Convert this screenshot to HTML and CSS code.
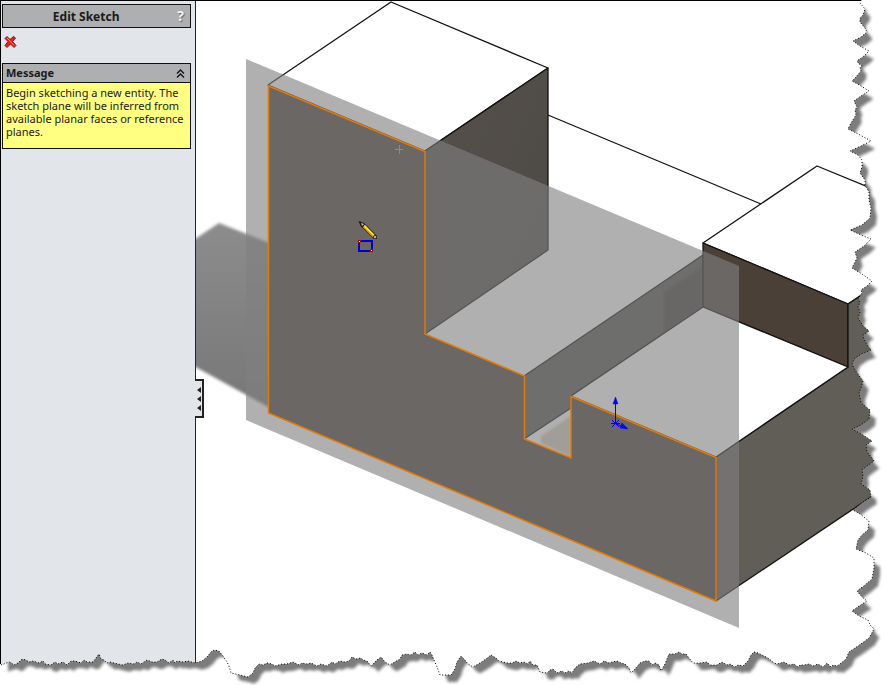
FILE: index.html
```html
<!DOCTYPE html>
<html lang="en">
<head>
<meta charset="utf-8">
<title>Edit Sketch</title>
<link rel="stylesheet" href="styles.css">
</head>
<body>
<div class="app">
  <aside class="panel">
    <header class="panel-title">
      <h1>Edit Sketch</h1>
      <button class="help" type="button" aria-label="Help">?</button>
    </header>
    <div class="actions">
      <button class="cancel" type="button" aria-label="Cancel">
        <svg viewBox="0 0 14 14" width="14" height="14">
          <path d="M2 3.500 4 1.500 7 4.500 10.500 1.500 12.500 3 9.500 6.500 13 10.500 11 12.500 7.500 9 4 12.500 2 10.500 5 6.500Z" fill="#e8231c" stroke="#7c1512"/>
          <path d="M4 3 7.500 6.500 11 10.500" fill="none" stroke="#ff8a80"/>
        </svg>
      </button>
    </div>
    <section class="message">
      <header class="message-head">
        <h2>Message</h2>
        <button class="collapse" type="button" aria-label="Collapse">
          <svg viewBox="0 0 9 9" width="9" height="9"><path d="M1 4.500 4.500 1 8 4.500M1 8.500 4.500 5 8 8.500" fill="none" stroke="#111" stroke-width="1.300"/></svg>
        </button>
      </header>
      <p>Begin sketching a new entity. The sketch plane will be inferred from available planar faces or reference planes.</p>
    </section>
    <button class="splitter" type="button" aria-label="Collapse panel">
      <svg viewBox="0 0 4 24" width="4" height="24"><path d="M4 0V6L0 3ZM4 9V15L0 12ZM4 18V24L0 21Z" fill="#222"/></svg>
    </button>
  </aside>
  <main class="viewport">
    <svg class="model" viewBox="196 0 691 685" preserveAspectRatio="xMinYMin meet" role="img" aria-label="Model with inferred sketch plane">
      <defs>
        <linearGradient id="castShade" x1="0" y1="0" x2="0" y2="1"><stop offset="0" stop-color="#8c8c8c"/><stop offset="1" stop-color="#777"/></linearGradient>
        <filter id="castBlur" x="-10%" y="-10%" width="120%" height="120%"><feGaussianBlur stdDeviation="1.800"/></filter>
        <filter id="patchBlur"><feGaussianBlur stdDeviation="1"/></filter>
        <linearGradient id="blade" x1="0" y1="0" x2="1" y2="1"><stop offset="0" stop-color="#554f48"/><stop offset="1" stop-color="#4c4a48"/></linearGradient>
      </defs>
      <path d="M186 245 219 223 272 244V409L190 364Z" fill="url(#castShade)" filter="url(#castBlur)"/>
      <g stroke="#111" stroke-width="1.300" stroke-linejoin="round">
        <path d="M548 115 761 204" fill="none"/>
        <path d="M268 85 391 2 548 68 425 151Z" fill="#fff"/>
        <path d="M425 151 548 68V250L425 334Z" fill="url(#blade)"/>
        <path d="M524 376 703 255V307L571 396V408L524 439Z" fill="#53514e"/>
        <path d="M664 292 702 267V307L664 332Z" fill="#44413e" stroke="none" filter="url(#patchBlur)"/>
        <path d="M703 243 817 166 895 198 887 278 848 304Z" fill="#fff"/>
        <path d="M703 243 848 304V367L703 307Z" fill="#4a4038"/>
        <path d="M716 457 848 367V304L895 273V481L716 601Z" fill="#605e57"/>
        <path d="M703 307 848 367 716 457 571 396Z" fill="#fff"/>
      </g>
      <path d="M541 436 571 416V457L541 443Z" fill="#d8d0c0" filter="url(#patchBlur)"/>
      <path d="M246 59 739 266V628L246 420Z" fill="#808080" fill-opacity=".62"/>
      <path d="M268.500 86 425 151.500V334L524.500 376V439L571 458V396.500L716 457.500V601L268.500 413Z" fill="#6b6764" stroke="#e27a08" stroke-width="1.500"/>
      <path d="M395 149.500H403M399.500 145V154" stroke="#d0783c" fill="none"/>
      <g fill="#00f" stroke="#00f">
        <path d="M615.500 423V403M611 423.500H620M612 420 619 427M619 420 612 427M616 424 622 426" fill="none"/>
        <path d="M615.500 397 618 404H613ZM622 423 628 429 620 428Z" stroke-width=".5"/>
      </g>
      <g>
        <path d="M359 241H372V251H359Z" fill="none" stroke="#0000c8" stroke-width="2"/>
        <path d="M358.500 240.500H360.500V242.500H358.500ZM370.500 249.500H372.500V251.500H370.500Z" fill="#fff" stroke="#b00000"/>
        <path d="M358.500 221 364 223 377 236V239H374L360.500 226Z" fill="#1c1a10"/>
        <path d="M361 223 364 224 362 226Z" fill="#dcb8a8"/>
        <path d="M363.200 226.800 373 236.500" stroke="#e8a800" stroke-width="1.200"/>
        <path d="M364.200 225.500 374 235.300" stroke="#ffe83a" stroke-width="1.800"/>
        <circle cx="375" cy="237" r="1.500" fill="#e8c8b8" stroke="#222" stroke-width=".6"/>
      </g>
    </svg>
  </main>
  <svg class="torn-edge" viewBox="0 0 887 685" preserveAspectRatio="none" aria-hidden="true">
    <defs>
      <path id="sheet" d="M0 0H861L860 3 865 9 863 15 860 18 860 22 865 28 867 32 861 37 853 41 860 46 869 51 864 56 857 61 859 64 862 65 860 68 861 71 856 77 852 81 861 86 869 91 861 96 854 101 857 107 855 110 856 115 851 123 848 129 860 135 871 141 861 146 850 151 858 155 862 160 862 167 860 173 865 180 865 185 869 192 869 200 871 208 870 218 862 225 850 230 861 235 871 239 864 246 855 252 857 258 854 264 852 268 862 274 872 281 867 286 861 290 862 293 858 299 860 302 858 307 860 312 858 318 863 326 869 331 863 335 864 339 867 345 871 350 861 354 854 359 852 364 855 370 860 377 863 381 861 388 859 393 861 403 866 407 870 410 869 419 861 425 852 429 863 435 872 441 866 445 867 452 872 458 874 461 867 466 862 470 863 476 861 484 870 490 871 497 863 502 853 510 860 514 869 521 868 530 862 535 858 540 856 549 866 553 874 558 874 568 872 579 865 585 857 591 862 597 867 601 859 606 852 611 859 616 868 620 870 625 874 629 869 638 858 646 849 652 846 659 840 664 837 666 833 665 831 667 827 663 823 667 818 664 813 666 809 664 804 665 800 665 798 667 794 664 789 665 784 662 777 664 774 663 768 658 762 655 758 653 754 652 751 655 748 661 743 666 738 665 735 667 730 664 727 665 722 662 717 665 710 665 707 662 700 663 693 663 689 658 686 654 682 654 679 652 675 654 669 654 665 664 661 671 659 665 655 663 652 665 649 661 645 661 640 663 635 669 631 673 629 668 625 664 621 663 617 661 612 662 609 663 604 661 600 664 594 661 588 663 580 664 575 668 572 673 569 671 565 673 562 671 557 673 553 669 550 670 547 673 540 672 537 665 533 665 530 661 528 664 524 662 520 663 516 661 512 663 507 663 499 661 496 658 491 655 486 659 480 663 473 667 468 664 464 659 461 656 457 662 455 669 451 675 440 675 437 667 434 660 432 655 430 652 427 655 422 653 418 655 415 652 411 655 407 654 402 655 400 659 393 663 390 665 385 662 381 657 377 660 371 666 367 661 363 660 361 658 356 659 352 657 349 661 345 662 340 661 335 664 332 662 327 666 321 664 317 666 311 663 307 664 302 663 299 665 293 662 287 664 282 664 275 666 272 664 267 663 263 665 259 664 255 668 253 673 248 677 240 675 231 673 229 666 227 662 223 656 219 651 214 650 211 652 207 657 202 661 195 663 188 661 183 662 177 661 175 663 173 660 169 663 165 660 162 659 157 662 152 662 147 660 141 664 137 662 134 664 128 663 123 665 118 664 110 662 107 663 104 660 101 659 99 654 96 658 93 662 87 662 84 660 81 663 75 661 71 661 67 665 63 662 58 664 55 662 51 665 45 664 43 661 39 663 33 661 29 662 26 660 22 659 18 663 14 665 10 662 6 663 2 665 0 664Z"/>
      <mask id="outside" maskUnits="userSpaceOnUse" x="0" y="0" width="887" height="685">
        <rect width="887" height="685" fill="#fff"/>
        <use href="#sheet" fill="#000"/>
      </mask>
      <filter id="dropBlur" x="-2%" y="-2%" width="104%" height="104%"><feMorphology operator="erode" radius="1"/><feGaussianBlur stdDeviation="1.700"/></filter>
    </defs>
    <g mask="url(#outside)">
      <rect width="887" height="685" fill="#fff"/>
      <use href="#sheet" transform="translate(7 8)" fill="#7c7c7c" filter="url(#dropBlur)"/>
    </g>
    <use href="#sheet" fill="none" stroke="#000" stroke-dasharray="1 2"/>
    <path d="M.500 664V.500H861" fill="none" stroke="#000"/>
  </svg>
</div>
</body>
</html>
```
FILE: styles.css
```css
* { box-sizing: border-box; }
body { margin: 0; background: #fff; color: #1a1a1a; font-family: "Noto Sans", "Open Sans", sans-serif; }
button { padding: 0; border: 0; background: none; font: inherit; color: inherit; cursor: pointer; }
svg { display: block; }
.app { position: relative; display: flex; height: 100vh; overflow: hidden; }
.panel { position: relative; flex: 0 0 196px; padding: 4px 4px 0 2px; background: #e2e6eb; border-right: 1px solid #22262a; }
.panel-title { display: flex; align-items: center; height: 24px; border: 1px solid #111; background: #adafb1; padding-right: 6px; }
.panel-title h1 { flex: 1; margin: 0; padding: 2px 8px 0 0; text-align: center; font-size: 12px; line-height: 16px; }
.help { font-size: 14px; line-height: 16px; font-weight: bold; color: #f2f2f2; text-shadow: 1px 1px 1px #666; }
.actions { padding: 7px 1px; }
.cancel { display: block; }
.message { margin-top: 7px; border: 1px solid #111; background: #ffff82; }
.message-head { display: flex; justify-content: space-between; align-items: center; height: 19px; padding: 0 5px 0 3px; border-bottom: 1px solid #111; background: #adafb1; }
.message h2 { margin: 0; font-size: 11px; line-height: 16px; }
.message p { margin: 0; padding: 3px 3px 10px; font-size: 11px; line-height: 13px; }
.splitter { position: absolute; z-index: 1; top: 379px; left: 195px; width: 9px; height: 39px; display: grid; place-items: center; background: #e2e6eb; border: 2px solid #222; border-left: 0; }
.viewport { flex: 1; min-width: 0; }
.model { width: 100%; height: 100%; }
.torn-edge { position: absolute; inset: 0; width: 100%; height: 100%; pointer-events: none; z-index: 2; }
```
